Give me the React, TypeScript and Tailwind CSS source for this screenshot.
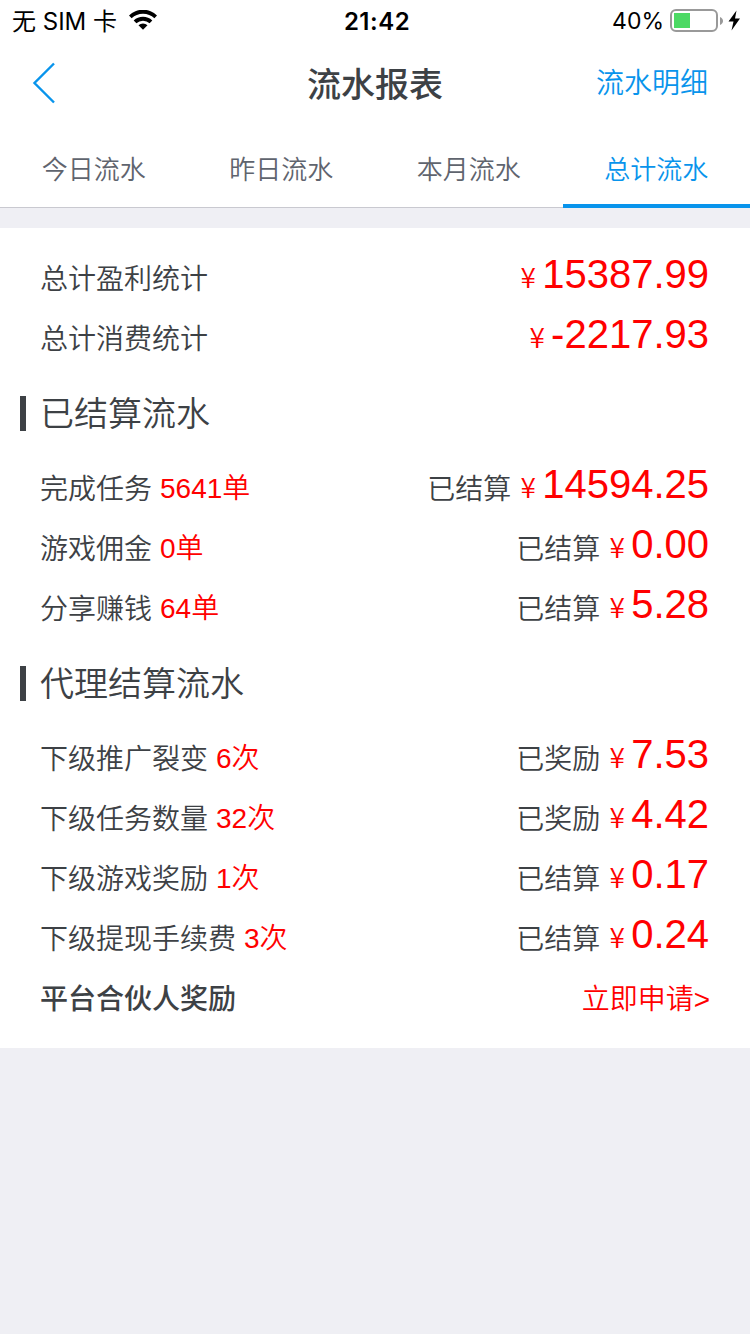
import React from "react";

const tabs = ["今日流水", "昨日流水", "本月流水", "总计流水"];

const settled = [
  { label: "完成任务", count: "5641单", status: "已结算", amount: "14594.25" },
  { label: "游戏佣金", count: "0单", status: "已结算", amount: "0.00" },
  { label: "分享赚钱", count: "64单", status: "已结算", amount: "5.28" },
];

const agent = [
  { label: "下级推广裂变", count: "6次", status: "已奖励", amount: "7.53" },
  { label: "下级任务数量", count: "32次", status: "已奖励", amount: "4.42" },
  { label: "下级游戏奖励", count: "1次", status: "已结算", amount: "0.17" },
  { label: "下级提现手续费", count: "3次", status: "已结算", amount: "0.24" },
];

interface RowProps {
  label: string;
  amount: string;
  count?: string;
  status?: string;
}

const StatusBar = () => {
  return (
    <div className="grid h-10 grid-cols-3 items-center pl-3 pr-2 pt-px font-['Inter','Noto_Sans_CJK_SC',sans-serif] text-[23px] font-normal leading-[39px] text-black">
      <div className="flex items-center">
        <span className="whitespace-pre text-2xl leading-[39px]">无 SIM 卡</span>
        <svg className="-mt-[2px] ml-3" width="28" height="20" viewBox="0 0 28 20">
          <path d="M0 5.400a20 20 0 0 1 28 0l-2.600 2.800a16.500 16.500 0 0 0-22.800 0z" />
          <path d="M4.700 10.500a13.500 13.500 0 0 1 18.600 0l-2.700 2.800a9.700 9.700 0 0 0-13.200 0z" />
          <path d="M9.500 15.300a6.500 6.500 0 0 1 9 0L14 19.700z" />
        </svg>
      </div>
      <span className="text-center text-2xl font-semibold leading-[39px] tracking-[0.5px]">21:42</span>
      <div className="flex items-center justify-end">
        <span className="pt-px">40%</span>
        <svg className="ml-[6px]" width="72" height="24" viewBox="0 0 72 24">
          <rect x="1" y="1" width="46" height="21" rx="5" fill="none" stroke="#999" strokeWidth="2" />
          <rect x="4" y="4" width="16" height="15" fill="#4cd964" />
          <path d="M50 8c4 1.500 4 6.500 0 8z" fill="#999" />
          <path d="M66.500 1.500 58.500 12.500h5L61.500 21.500 70 9.500h-5z" />
        </svg>
      </div>
    </div>
  );
};

const Row = ({ label, amount, count, status }: RowProps) => {
  return (
    <div className="flex h-[60px] items-center justify-between">
      <div className="flex gap-2 pt-[3px]">
        <span>{label}</span>
        {count && <span className="-mt-px text-[#ff0000]">{count}</span>}
      </div>
      <div className="flex items-baseline pb-[9px] pr-px">
        {status && <span className="relative top-px">{status}</span>}
        <span className="-mr-px w-8 pl-[2px] text-center font-['Noto_Sans_CJK_SC',sans-serif] text-[28px] text-[#ff0000]">¥</span>
        <span className="text-[40px] leading-[60px] text-[#ff0000]">{amount}</span>
      </div>
    </div>
  );
};

const Heading = ({ children }: { children: React.ReactNode }) => {
  return (
    <div className="-ml-5 flex h-[90px] items-center gap-[14px] text-[34px]">
      <div className="h-[35px] w-[6px] bg-[#3d4145]" />
      <h2 className="pt-[3px]">{children}</h2>
    </div>
  );
};

const App = () => {
  return (
    <div className="min-h-screen bg-[#efeff4] font-['Liberation_Sans','Noto_Sans_CJK_SC',sans-serif] text-[28px] font-[350] text-[#3d4145]">
      <header className="bg-white">
        <StatusBar />
        <div className="grid h-[88px] grid-cols-3 items-center px-[30px] text-[#0894ec]">
          <svg width="28" height="44" viewBox="0 0 28 44" fill="none" stroke="currentColor" strokeWidth="2.400">
            <path d="M24 1.500 4.500 21 24 40.500" />
          </svg>
          <h1 className="pt-[2px] text-center text-[34px] font-medium text-[#3d4145]">流水报表</h1>
          <span className="pr-3 text-right">流水明细</span>
        </div>
        <nav className="flex h-20 border-b border-[#c9c9d0] text-[26px] text-[#5f646e]">
          {tabs.map((tab, idx) => (
            <div
              key={tab}
              className={
                idx === 3
                  ? "-mb-px flex flex-1 items-center justify-center border-b-4 border-[#0894ec] pt-[9px] text-[#0894ec]"
                  : "flex flex-1 items-center justify-center pt-[6px]"
              }
            >
              {tab}
            </div>
          ))}
        </nav>
      </header>

      <main className="mt-5 bg-white px-10 py-5">
        <Row label="总计盈利统计" amount="15387.99" />
        <Row label="总计消费统计" amount="-2217.93" />
        <Heading>已结算流水</Heading>
        {settled.map((item) => (
          <Row key={item.label} {...item} />
        ))}
        <Heading>代理结算流水</Heading>
        {agent.map((item) => (
          <Row key={item.label} {...item} />
        ))}
        <div className="flex h-[60px] items-center justify-between pt-[3px]">
          <span className="font-medium">平台合伙人奖励</span>
          <span className="text-[#ff0000]">立即申请&gt;</span>
        </div>
      </main>
    </div>
  );
};

export default App;
